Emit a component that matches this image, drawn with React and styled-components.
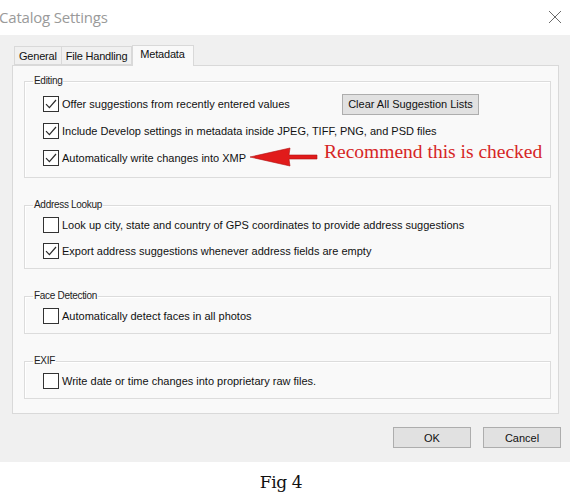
import React from 'react'
import styled, { createGlobalStyle } from 'styled-components'

const GlobalStyle = createGlobalStyle`
    html, body {
        margin: 0;
        padding: 0;
        background: #ffffff;
    }
    * {
        box-sizing: border-box;
    }
`

const groups = [
    {
        title: 'Editing',
        rows: [
            { label: 'Offer suggestions from recently entered values', checked: true, button: 'Clear All Suggestion Lists' },
            { label: 'Include Develop settings in metadata inside JPEG, TIFF, PNG, and PSD files', checked: true },
            { label: 'Automatically write changes into XMP', checked: true, note: 'Recommend this is checked' },
        ],
    },
    {
        title: 'Address Lookup',
        rows: [
            { label: 'Look up city, state and country of GPS coordinates to provide address suggestions', checked: false },
            { label: 'Export address suggestions whenever address fields are empty', checked: true },
        ],
    },
    {
        title: 'Face Detection',
        rows: [
            { label: 'Automatically detect faces in all photos', checked: false },
        ],
    },
    {
        title: 'EXIF',
        rows: [
            { label: 'Write date or time changes into proprietary raw files.', checked: false },
        ],
    },
]

function CheckBox({ checked }) {
    return (
        <Box>
            {checked && (
                <svg width="14" height="14" viewBox="0 0 14 14">
                    <path d="M2 7.2 L5.4 10.6 L12 3" fill="none" stroke="#2b2b2b" strokeWidth="1.2" />
                </svg>
            )}
        </Box>
    )
}

function RedArrow() {
    return (
        <svg width="68" height="20" viewBox="0 0 68 20">
            <path d="M0 10 L40 1 L39 8 L67 8 L67 12 L39 12 L40 19 Z" fill="#e11b1b" stroke="#b01010" strokeWidth="0.6" />
        </svg>
    )
}

function App() {
    return (
        <>
            <GlobalStyle />
            <Page>
                <Window>
                    <TitleBar>
                        <h1>Catalog Settings</h1>
                        <svg width="14" height="14" viewBox="0 0 14 14">
                            <path d="M1 1 L13 13 M13 1 L1 13" stroke="#6b6b6b" strokeWidth="1" />
                        </svg>
                    </TitleBar>
                    <Body>
                        <Tabs>
                            <Tab>General</Tab>
                            <Tab>File Handling</Tab>
                            <Tab $active>Metadata</Tab>
                        </Tabs>
                        <Panel>
                            {groups.map((group) => (
                                <Group key={group.title}>
                                    <legend>{group.title}</legend>
                                    {group.rows.map((row) => (
                                        <Row key={row.label}>
                                            <CheckLabel $wide={!!row.button}>
                                                <CheckBox checked={row.checked} />
                                                <span>{row.label}</span>
                                            </CheckLabel>
                                            {row.button && <Button $w={137}>{row.button}</Button>}
                                            {row.note && (
                                                <Note>
                                                    <RedArrow />
                                                    <span>{row.note}</span>
                                                </Note>
                                            )}
                                        </Row>
                                    ))}
                                </Group>
                            ))}
                        </Panel>
                        <Footer>
                            <Button $w={78}>OK</Button>
                            <Button $w={78}>Cancel</Button>
                        </Footer>
                    </Body>
                </Window>
                <Caption>Fig 4</Caption>
            </Page>
        </>
    )
}

export default App

const Page = styled.div`
    width: 574px;
    height: 498px;
    display: flex;
    flex-direction: column;
    background: #ffffff;
    overflow: hidden;
`

const Window = styled.div`
    width: 570px;
    display: flex;
    flex-direction: column;
`

const TitleBar = styled.div`
    height: 35px;
    display: flex;
    align-items: center;
    justify-content: space-between;
    padding: 0 8px 2px 0;
    background: #ffffff;
    h1{
        margin: 0;
        font-family: "Open Sans", "Noto Sans", sans-serif;
        font-weight: 400;
        font-size: 15px;
        letter-spacing: -0.2px;
        color: #9a9a9a;
        margin-left: -1px;
    }
`

const Body = styled.div`
    height: 427px;
    background: #f0f0f0;
    padding: 9px 0 0 12px;
    display: flex;
    flex-direction: column;
    font-family: "Liberation Sans", Arial, sans-serif;
    font-size: 11px;
    color: #111;
`

const Tabs = styled.div`
    display: flex;
    align-items: flex-end;
    height: 21px;
    padding-left: 2px;
    position: relative;
    z-index: 1;
`

const Tab = styled.div`
    height: ${({ $active }) => ($active ? '21px' : '19px')};
    padding: ${({ $active }) => ($active ? '2px 8px 0 7px' : '3px 4px 0')};
    margin-left: ${({ $active }) => ($active ? '0' : '0')};
    margin-bottom: ${({ $active }) => ($active ? '-1px' : '0')};
    border: 1px solid #d9d9d9;
    border-left: ${({ $active }) => ($active ? '1px solid #d9d9d9' : 'none')};
    border-bottom: ${({ $active }) => ($active ? 'none' : '1px solid #d9d9d9')};
    background: ${({ $active }) => ($active ? '#f9f9f9' : '#f0f0f0')};
    font-size: 11px;
    letter-spacing: -0.2px;
    color: #111;
    &:first-child{
        border-left: 1px solid #d9d9d9;
    }
`

const Panel = styled.div`
    width: 547px;
    height: 349px;
    border: 1px solid #d9d9d9;
    background: #f9f9f9;
    padding: 8px 8px 0 11px;
    display: flex;
    flex-direction: column;
    gap: 20px;
`

const Group = styled.fieldset`
    margin: 0;
    width: 527px;
    border: 1px solid #dcdcdc;
    box-shadow: inset 1px 1px 0 #ffffff;
    padding: 0 0 4px 18px;
    display: flex;
    flex-direction: column;
    gap: 0px;
    legend{
        margin-left: -10px;
        padding: 0 1px;
        font-size: 10px;
        letter-spacing: -0.3px;
        line-height: 14px;
        color: #222;
    }
    &:first-of-type{
        padding-top: 3px;
        padding-bottom: 6px;
        gap: 1px;
    }
`

const Row = styled.div`
    height: 26px;
    display: flex;
    align-items: center;
`

const CheckLabel = styled.label`
    display: flex;
    align-items: center;
    gap: 3px;
    width: ${({ $wide }) => ($wide ? '299px' : 'auto')};
    white-space: nowrap;
`

const Box = styled.span`
    width: 16px;
    height: 16px;
    border: 1px solid #333333;
    background: #ffffff;
    display: flex;
    align-items: center;
    justify-content: center;
    flex-shrink: 0;
`

const Button = styled.button`
    width: ${({ $w }) => $w}px;
    height: 21px;
    padding: 0;
    border: 1px solid #adadad;
    background: #e1e1e1;
    font-family: "Liberation Sans", Arial, sans-serif;
    font-size: 11px;
    color: #111;
`

const Note = styled.div`
    display: flex;
    align-items: center;
    margin-left: 4px;
    span{
        margin-left: 6px;
        margin-top: -12px;
        font-family: "Liberation Serif", "DejaVu Serif", serif;
        font-size: 19.5px;
        color: #d62626;
        white-space: nowrap;
    }
    svg{
        margin-top: -2px;
    }
`

const Footer = styled.div`
    display: flex;
    justify-content: flex-end;
    gap: 12px;
    padding: 13px 9px 0 0;
`

const Caption = styled.div`
    flex: 1;
    display: flex;
    justify-content: center;
    padding: 10px 12px 0 0;
    font-family: "DejaVu Serif", serif;
    font-size: 17px;
    letter-spacing: -0.4px;
    color: #111;
`
